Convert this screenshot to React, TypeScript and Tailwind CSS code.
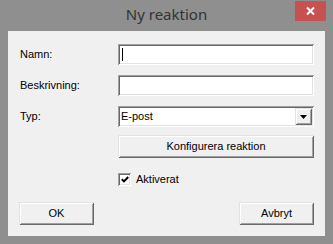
import React from 'react';

const sunken =
  'shadow-[inset_1px_1px_0_#a0a0a0,inset_-1px_-1px_0_#ffffff,inset_2px_2px_0_#696969,inset_-2px_-2px_0_#e3e3e3]';
const raised =
  'shadow-[inset_1px_1px_0_#e3e3e3,inset_-1px_-1px_0_#696969,inset_2px_2px_0_#ffffff,inset_-2px_-2px_0_#a0a0a0]';

function Row({ label, children }: { label: string; children: React.ReactNode }) {
  return (
    <div className="flex items-center">
      <span className="w-[110px] pl-[12px] text-[11px] leading-none text-black">{label}</span>
      {children}
    </div>
  );
}

function TextBox({ caret }: { caret?: boolean }) {
  return (
    <div className={`flex h-[21px] w-[196px] items-center bg-white pl-[4px] ${sunken}`}>
      {caret && <span className="h-[13px] w-px bg-black" />}
    </div>
  );
}

function Button({ children, className = '' }: { children: React.ReactNode; className?: string }) {
  return (
    <button
      type="button"
      className={`flex h-[23px] items-center justify-center bg-[#f0f0f0] text-[11px] text-black ${raised} ${className}`}
    >
      {children}
    </button>
  );
}

export default function App() {
  return (
    <div
      className="flex h-[244px] w-[333px] flex-col bg-[#8f8f8f]"
      style={{ fontFamily: '"Liberation Sans", Arial, sans-serif' }}
    >
      {/* title bar */}
      <div className="grid h-[31px] grid-cols-[1fr_auto_1fr] items-start">
        <div />
        <span
          className="pt-[4px] text-[15px] leading-[20px] text-[#333333]"
          style={{ fontFamily: '"Noto Sans", "Open Sans", sans-serif' }}
        >
          Ny reaktion
        </span>
        <div className="flex justify-end pr-[7px] pt-px">
          <div className="flex h-[20px] w-[31px] items-center justify-center bg-[#c75050]">
            <svg width="9" height="8" viewBox="0 0 9 8">
              <path d="M1 0.5 L8 7.5 M8 0.5 L1 7.5" stroke="#fff" strokeWidth="2" />
            </svg>
          </div>
        </div>
      </div>

      {/* client area */}
      <div className="mx-[8px] flex h-[205px] flex-col bg-[#f0f0f0] pt-[13px]">
        <div className="flex flex-col gap-[10px]">
          <Row label="Namn:">
            <TextBox caret />
          </Row>
          <Row label="Beskrivning:">
            <TextBox />
          </Row>
          <Row label="Typ:">
            <div className={`flex h-[21px] w-[196px] items-center justify-between bg-white pl-[3px] pr-[2px] ${sunken}`}>
              <span className="text-[11px] text-black">E-post</span>
              <div className={`flex h-[17px] w-[17px] items-center justify-center bg-[#f0f0f0] ${raised}`}>
                <svg width="7" height="4" viewBox="0 0 7 4">
                  <path d="M0 0 H7 L3.5 4 Z" fill="#000" />
                </svg>
              </div>
            </div>
          </Row>
        </div>

        <div className="mt-[8px] pl-[110px]">
          <Button className="w-[196px]">Konfigurera reaktion</Button>
        </div>

        <div className="mt-[15px] flex items-center gap-[5px] pl-[110px]">
          <div className={`flex h-[13px] w-[13px] items-center justify-center bg-white ${sunken}`}>
            <svg width="8" height="7" viewBox="0 0 8 7">
              <path d="M0.8 3.2 L3 5.4 L7.2 1" stroke="#000" strokeWidth="2" fill="none" />
            </svg>
          </div>
          <span className="text-[11px] leading-none text-black">Aktiverat</span>
        </div>

        <div className="mt-[16px] flex justify-between pl-[11px] pr-[11px]">
          <Button className="w-[75px]">OK</Button>
          <Button className="w-[75px]">Avbryt</Button>
        </div>
      </div>
    </div>
  );
}
